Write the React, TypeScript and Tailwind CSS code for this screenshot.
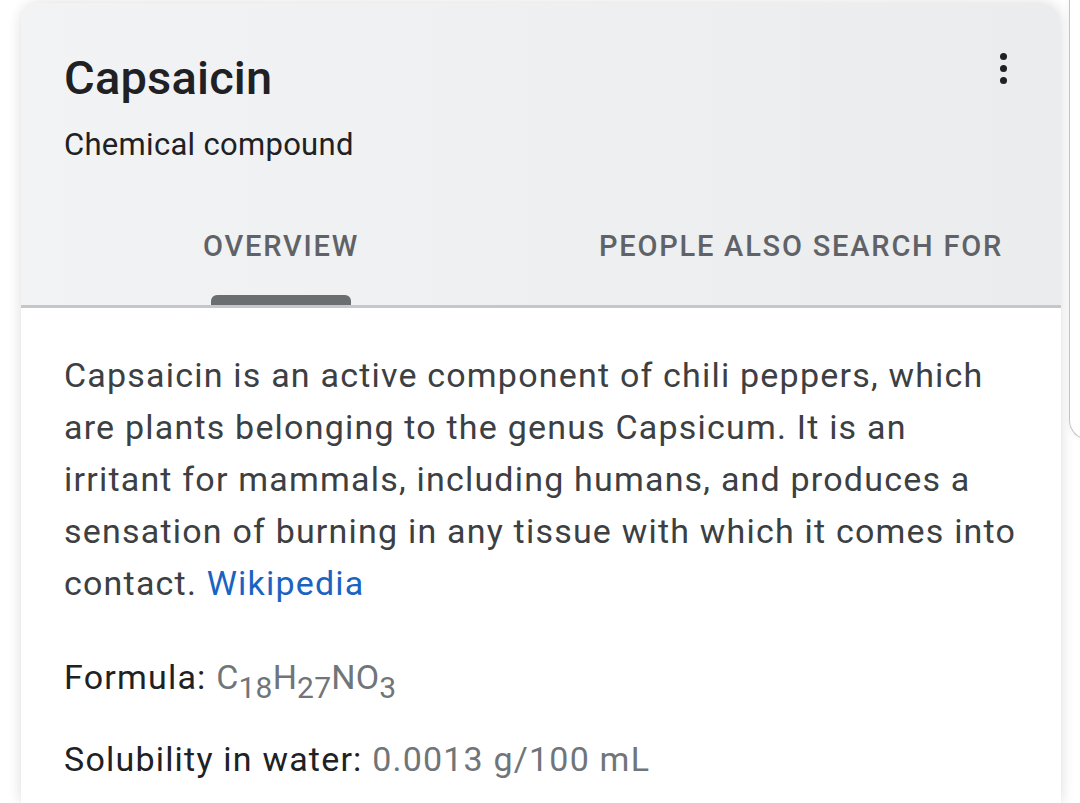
export default function App() {
  const lines = [
    'Capsaicin is an active component of chili peppers, which',
    'are plants belonging to the genus Capsicum. It is an',
    'irritant for mammals, including humans, and produces a',
    'sensation of burning in any tissue with which it comes into',
  ];

  return (
    <div className="w-[1080px] h-[803px] overflow-hidden bg-white flex font-['Roboto',sans-serif]">
      <div className="ml-[21px] mt-[3px] w-[1040px] shrink-0 rounded-t-[20px] bg-white shadow-[0_0_14px_rgba(0,0,0,0.14)] overflow-hidden">
        <div className="bg-gradient-to-r from-[#f2f3f4] to-[#ebecee]">
          <div className="flex justify-between pl-[43px] pr-[54px] pt-[50px]">
            <div>
              <h1 className="text-[47px] leading-[50px] font-medium text-[#202124] tracking-[0.2px]">Capsaicin</h1>
              <p className="mt-[25px] text-[31px] leading-[34px] text-[#202124] tracking-[0.3px]">Chemical compound</p>
            </div>
            <div className="flex flex-col gap-[5px]">
              <span className="w-[7px] h-[7px] rounded-full bg-[#202124]" />
              <span className="w-[7px] h-[7px] rounded-full bg-[#202124]" />
              <span className="w-[7px] h-[7px] rounded-full bg-[#202124]" />
            </div>
          </div>
          <div className="flex mt-[67px]">
            <div className="flex-1 flex flex-col items-center">
              <span className="text-[29px] leading-[34px] font-medium text-[#5f6368] tracking-[1.8px]">OVERVIEW</span>
              <span className="mt-[32px] w-[140px] h-[10px] rounded-t-[6px] bg-[#6b6e71]" />
            </div>
            <div className="flex-1 flex flex-col items-center">
              <span className="text-[29px] leading-[34px] font-medium text-[#5f6368] tracking-[1.8px]">PEOPLE ALSO SEARCH FOR</span>
              <span className="mt-[32px] h-[10px]" />
            </div>
          </div>
          <div className="h-[3px] bg-[#c5c7ca]" />
        </div>
        <div className="px-[43px] pt-[41px] text-[34px] tracking-[1.2px] text-[#3c4043]">
          <div className="leading-[52px]">
            {lines.map((l) => (
              <div key={l} className="whitespace-nowrap">{l}</div>
            ))}
            <div>
              contact. <span className="text-[#1a63c2]">Wikipedia</span>
            </div>
          </div>
          <div className="mt-[42px] leading-[52px] whitespace-nowrap">
            <span className="text-[#202124]">Formula: </span>
            <span className="text-[#70757a] tracking-[0.2px]">
              C<sub className="text-[30px] relative top-[9px]">18</sub>H<sub className="text-[30px] relative top-[9px]">27</sub>NO<sub className="text-[30px] relative top-[9px]">3</sub>
            </span>
          </div>
          <div className="mt-[30px] leading-[52px] whitespace-nowrap">
            <span className="text-[#202124]">Solubility in water: </span>
            <span className="text-[#70757a]">0.0013 g/100 mL</span>
          </div>
        </div>
      </div>
      <div className="ml-[8px] w-[200px] h-[440px] shrink-0 border-l border-b border-[#c4c4c4] rounded-bl-[20px] bg-white shadow-[0_0_6px_rgba(0,0,0,0.06)]" />
    </div>
  );
}
